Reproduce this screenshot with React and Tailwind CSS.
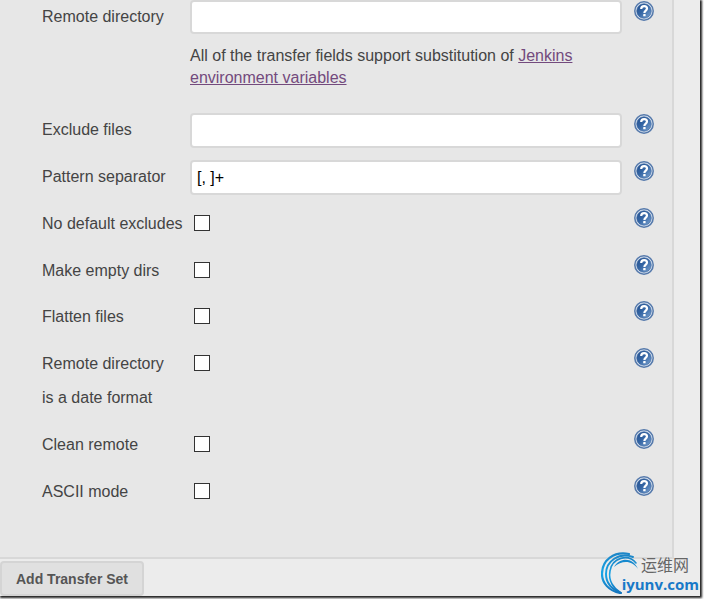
import React from "react";

const checks = [
  { id: "no-default-excludes", label: "No default excludes", space: "pb-[13px]" },
  { id: "make-empty-dirs", label: "Make empty dirs", space: "pb-3" },
  { id: "flatten-files", label: "Flatten files", space: "pb-[13px]" },
  { id: "date-format", label: "Remote directory\nis a date format", space: "pb-[13px]" },
  { id: "clean-remote", label: "Clean remote", space: "pb-[13px]" },
  { id: "ascii-mode", label: "ASCII mode", space: "pb-12" },
];

function Help({ topic }) {
  return (
    <button type="button" aria-label={`Help for ${topic}`} className="mt-px ml-3 size-5 shrink-0">
      <svg viewBox="0 0 20 20" className="size-5" aria-hidden="true">
        <defs>
          <linearGradient id="help-fill" x1="0" y1="0" x2="1" y2="1">
            <stop offset="0" stopColor="#24508f" />
            <stop offset="0.45" stopColor="#3465a4" />
            <stop offset="1" stopColor="#7fa5d2" />
          </linearGradient>
        </defs>
        <circle cx="10" cy="10" r="9.2" fill="#dfe8f3" stroke="#5579ab" strokeWidth="1.5" />
        <circle cx="10" cy="10" r="7.3" fill="url(#help-fill)" stroke="#3d669f" strokeWidth="0.6" />
        <path
          d="M7.2 8C7.2 6 8.4 5.1 10.1 5.1C11.9 5.1 13 6.1 13 7.6C13 9.6 10.4 9.6 10.4 12"
          fill="none"
          stroke="#fff"
          strokeWidth="2.2"
        />
        <rect x="9.2" y="13" width="2.4" height="2.3" rx="0.4" fill="#fff" />
      </svg>
    </button>
  );
}

function Row({ id, label, space, children }) {
  return (
    <div className={`flex items-start ${space}`}>
      <label htmlFor={id} className="w-[148px] shrink-0 leading-[34px] whitespace-pre-line">
        {label}
      </label>
      <div className="min-w-0 flex-1">{children}</div>
      <Help topic={label} />
    </div>
  );
}

function TextBox({ id, value, height }) {
  return (
    <input
      id={id}
      type="text"
      defaultValue={value}
      className={`block w-full rounded-[4px] border-2 border-[#d8d8d8] bg-white px-[5px] text-base text-black ${height}`}
    />
  );
}

function Watermark() {
  return (
    <div className="absolute right-[5px] bottom-1 h-11 w-[98px]">
      <svg viewBox="0 0 44 44" className="absolute inset-0 size-11" aria-hidden="true">
        <defs>
          <linearGradient id="swirl" x1="0" y1="0" x2="0" y2="1">
            <stop offset="0" stopColor="#1c86c8" />
            <stop offset="0.5" stopColor="#19a5e6" />
            <stop offset="1" stopColor="#1474bd" />
          </linearGradient>
        </defs>
        <g fill="none" stroke="url(#swirl)" strokeLinecap="round">
          <path d="M28 2C13-1 1 8 1 22C1 31 8 39 19 41" strokeWidth="2.2" />
          <path d="M32 5C18 0 5 9 5 22C5 30 10 37 20 41" strokeWidth="2" />
          <path d="M35 11C27 1 11 6 9 19C7 29 13 37 20 41" strokeWidth="1.6" />
        </g>
        <path d="M37 17C32 5 19 5 13 15C21 8 31 8 37 17Z" fill="#1689ce" />
      </svg>
      <span className="absolute top-1 right-[10px] font-['Noto_Sans_CJK_SC',sans-serif] text-base leading-4 text-[#666]">
        运维网
      </span>
      <span className="absolute right-0 bottom-1 font-['Open_Sans',sans-serif] text-[15px] leading-4 font-bold text-[#1879c8]">
        iyunv.com
      </span>
    </div>
  );
}

export default function App() {
  return (
    <div className="relative bg-white pr-1 pb-1 font-['Liberation_Sans',Arial,sans-serif] text-base text-[#444]">
      <main className="bg-[#ececec] shadow-[1px_1px_2px_1px_#222]">
        <section className="mr-[26px] border-r-2 border-b-2 border-[#d8d8d8] bg-[#e7e7e7] pr-[18px] pl-[42px]">
          <Row id="remote-directory" label="Remote directory" space="pb-[24px]">
            <TextBox id="remote-directory" value="" height="h-[34px]" />
            <p className="pt-[11px] leading-[22px]">
              All of the transfer fields support substitution of{" "}
              <a href="#variables" className="text-[#734a7d] underline">
                Jenkins environment variables
              </a>
            </p>
          </Row>
          <Row id="exclude-files" label="Exclude files" space="pb-3">
            <TextBox id="exclude-files" value="" height="h-[35px]" />
          </Row>
          <Row id="pattern-separator" label="Pattern separator" space="pb-3">
            <TextBox id="pattern-separator" value="[, ]+" height="h-[35px]" />
          </Row>
          {checks.map(({ id, label, space }) => (
            <Row key={id} id={id} label={label} space={space}>
              <input
                id={id}
                type="checkbox"
                className="mt-2 ml-1 block size-4 appearance-none border border-[#333] bg-white checked:bg-[#333]"
              />
            </Row>
          ))}
        </section>
        <button
          type="button"
          className="mt-[2px] block h-[35px] rounded-[4px] border-2 border-[#d4d4d4] bg-[#e0e0e0] px-[14px] text-sm font-bold text-[#555]"
        >
          Add Transfer Set
        </button>
      </main>
      <Watermark />
    </div>
  );
}
